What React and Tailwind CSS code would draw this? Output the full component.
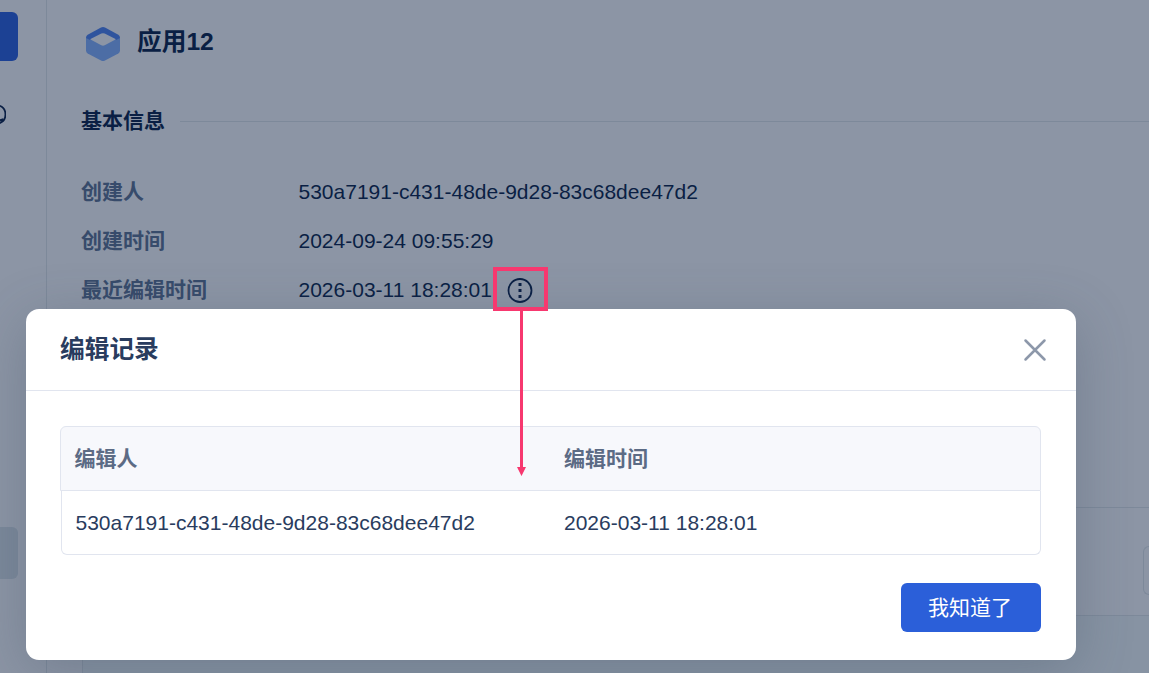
const uuid = "530a7191-c431-48de-9d28-83c68dee47d2";

function Logo() {
  return (
    <svg width="34" height="34" viewBox="0 0 34 34" className="block shrink-0">
      <path d="M0 11 17 2 34 11V23.500Q34 25.500 32.300 26.500L19 33.500Q17 34.500 15 33.500L1.700 26.500Q0 25.500 0 23.500Z" fill="#4c6da5" />
      <path d="M0 11Q0 8.700 1.700 7.700L15 .600Q17-.400 19 .600L32.300 7.700Q34 8.700 34 11L30 13H4Z" fill="#2f549e" />
      <path d="M4 12.300 15.300 6.600Q17 5.800 18.700 6.600L30 12.300 18.700 18.300Q17 19.200 15.300 18.300Z" fill="#8c95a5" />
    </svg>
  );
}

function Sidebar() {
  return (
    <aside className="flex h-full w-[47px] shrink-0 flex-col border-r border-[#7d899a] pt-3">
      <div className="h-[49px] w-[18px] rounded-r-[6px] bg-[#1c4194]" />
      <svg width="6" height="26" viewBox="0 0 6 26" className="mt-[40px] block" fill="none" stroke="#0a1f44" strokeWidth="1.800">
        <path d="M-1 4.500A9.500 9.500 0 0 1-1 22.500" />
        <path d="M0 19.500 3.500 18.500" strokeWidth="2.500" />
      </svg>
      <div className="mt-[400px] h-[52px] w-[18px] rounded-r-[6px] bg-[#7b889a]" />
    </aside>
  );
}

function InfoRow({ label, children }) {
  return (
    <div className="flex h-[49px] items-center">
      <div className="w-[217.500px] shrink-0 font-bold text-[#374b6b]">{label}</div>
      <div className="flex items-center text-[#0a1f44]">{children}</div>
    </div>
  );
}

function Page() {
  return (
    <div className="flex h-full">
      <Sidebar />
      <main className="flex min-w-0 flex-1 flex-col">
        <header className="flex h-[88px] items-center pl-[39px]">
          <Logo />
          <h1 className="mb-[4px] ml-[17px] text-[24.700px] leading-[36px] font-bold text-[#0a1f44]">应用12</h1>
        </header>
        <div className="flex h-[66px] items-center pl-[34px]">
          <h2 className="font-bold text-[#0a1f44]">基本信息</h2>
          <div className="ml-[15px] h-px flex-1 bg-[#7d899a]" />
        </div>
        <section className="mt-[13px] pl-[34px]">
          <InfoRow label="创建人">{uuid}</InfoRow>
          <InfoRow label="创建时间">2024-09-24 09:55:29</InfoRow>
          <InfoRow label="最近编辑时间">
            <span>2026-03-11 18:28:01</span>
            <svg width="26" height="26" viewBox="0 0 26 26" className="ml-[15px] block">
              <circle cx="13" cy="13.500" r="11.500" fill="none" stroke="#0a1f44" strokeWidth="1.800" />
              <path d="M11.500 6h3v3h-3zM11.500 12h3v3h-3zM11.500 18h3v3h-3z" fill="#0a1f44" />
            </svg>
          </InfoRow>
        </section>
        <section className="mt-[193px] flex flex-1 flex-col border-t border-[#7d899a]">
          <div className="flex h-[107px] items-start justify-end pt-[38px]">
            <div className="h-[49px] w-[6px] rounded-l-[6px] border border-r-0 border-[#7d899a]" />
          </div>
          <div className="ml-[35px] flex-1 border-t border-l border-[#7d899a] bg-[#8793a3]" />
        </section>
      </main>
    </div>
  );
}

function Dialog() {
  return (
    <div role="dialog" className="absolute top-[309px] left-[26px] flex h-[351px] w-[1050px] flex-col rounded-[13px] bg-white shadow-[0_12px_55px_rgba(60,75,95,0.3)]">
      <header className="flex h-[82px] shrink-0 items-center justify-between border-b border-[#e1e5ef] pr-[29px] pl-[34px]">
        <h2 className="text-[24.700px] leading-[36px] font-bold text-[#293c5e]">编辑记录</h2>
        <svg width="24" height="24" viewBox="0 0 24 24" className="block" fill="none" stroke="#8d98aa" strokeWidth="2.500" strokeLinecap="round">
          <path d="M2.500 2.500 21.500 21.500M21.500 2.500 2.500 21.500" />
        </svg>
      </header>
      <div className="mx-[34px] mt-[35px] w-[981px] text-[#293c5e]">
        <div className="flex h-[65px] items-center rounded-t-[6px] border border-[#e1e5ef] bg-[#f7f8fc] font-bold text-[#5c6b85]">
          <div className="w-[489px] pl-[13.500px]">编辑人</div>
          <div className="pl-[14px]">编辑时间</div>
        </div>
        <div className="ml-px flex h-[64px] items-center rounded-b-[6px] border border-t-0 border-[#e1e5ef]">
          <div className="w-[488px] pl-[13.500px]">{uuid}</div>
          <div className="pl-[14px]">2026-03-11 18:28:01</div>
        </div>
      </div>
      <footer className="mt-[28px] flex justify-end pr-[35px]">
        <button className="h-[49px] w-[140px] rounded-[6px] bg-[#2b5fd9] pr-[2px] text-white">我知道了</button>
      </footer>
    </div>
  );
}

export default function App() {
  return (
    <div className="relative h-[673px] w-[1149px] overflow-hidden bg-[#8c95a5] font-['Liberation_Sans','Noto_Sans_CJK_SC',sans-serif] text-[21px] leading-[30px]">
      <Page />
      <Dialog />
      <div className="absolute top-[267px] left-[493px] h-[44px] w-[55px] border-4 border-[#f7386f]" />
      <svg width="10" height="165" viewBox="0 0 10 165" className="absolute top-[311px] left-[517px]" fill="#f7386f">
        <path d="M3 0h3v156H9L4.500 165 0 156H3Z" />
      </svg>
    </div>
  );
}
